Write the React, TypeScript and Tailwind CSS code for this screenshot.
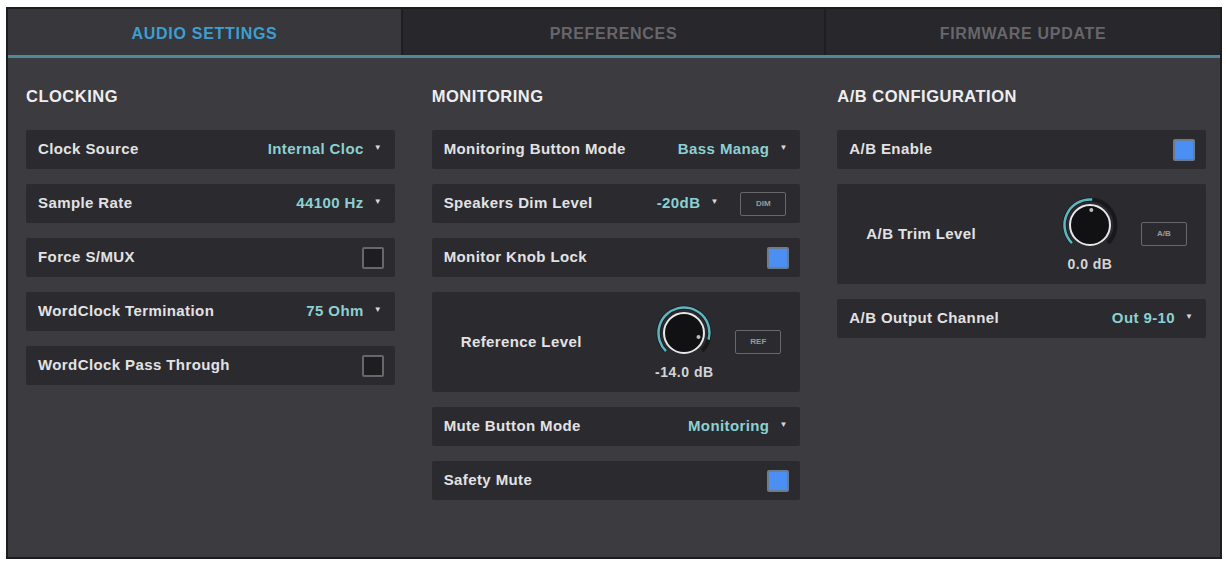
import React from "react";

const font = { fontFamily: '"Liberation Sans", Arial, sans-serif' };

type RowProps = { label: string; children?: React.ReactNode };

const Row = ({ label, children }: RowProps) => (
  <div className="flex h-[39px] items-center justify-between rounded-[2px] bg-[#2b2a2e] pl-[12px] pr-[11px]">
    <span className="text-[15px] font-bold tracking-[0.4px] text-[#e2e2e4]">{label}</span>
    <div className="flex items-center">{children}</div>
  </div>
);

const Select = ({ value }: { value: string }) => (
  <div className="flex items-center gap-[10px] pr-[2px]">
    <span className="text-[15px] font-bold tracking-[0.4px] text-[#8cd0d3]">{value}</span>
    <span className="-mt-[3px] text-[8px] leading-none text-[#d8d8da]">▼</span>
  </div>
);

const Check = ({ on }: { on?: boolean }) => (
  <div
    className={
      on
        ? "h-[22px] w-[22px] rounded-[2px] border-2 border-[#6c7c8e] bg-[#4b8ff2]"
        : "h-[22px] w-[22px] rounded-[2px] border-2 border-[#67676b] bg-[#1e1e20]"
    }
  />
);

const SmallButton = ({ text }: { text: string }) => (
  <div className="flex h-[24px] w-[46px] items-center justify-center rounded-[2px] border border-[#68686c] text-[8px] font-bold text-[#9a9a9e]">
    {text}
  </div>
);

const pt = (a: number, r: number) => {
  const rad = (a * Math.PI) / 180;
  return [30 + r * Math.sin(rad), 30 - r * Math.cos(rad)];
};

const arc = (a0: number, a1: number, r: number) => {
  const [x0, y0] = pt(a0, r);
  const [x1, y1] = pt(a1, r);
  const large = a1 - a0 > 180 ? 1 : 0;
  return `M ${x0} ${y0} A ${r} ${r} 0 ${large} 1 ${x1} ${y1}`;
};

const Knob = ({ end }: { end: number }) => {
  const [dx, dy] = pt(end, 15);
  return (
    <svg width="60" height="60" viewBox="0 0 60 60">
      <path d={arc(-135, 135, 25.5)} fill="none" stroke="#19191b" strokeWidth="4" />
      <path d={arc(-135, end, 25.5)} fill="none" stroke="#5cb6c2" strokeWidth="2.5" />
      <circle cx="30" cy="30" r="20" fill="#111113" stroke="#e8e8ea" strokeWidth="2" />
      <circle cx={dx} cy={dy} r="2" fill="#bdbdc0" />
    </svg>
  );
};

const KnobBox = ({ label, value, end, button }: { label: string; value: string; end: number; button: string }) => (
  <div className="flex h-[100px] items-center rounded-[2px] bg-[#2b2a2e] pl-[29px] pr-[19px]">
    <span className="flex-1 text-[15px] font-bold tracking-[0.4px] text-[#e2e2e4]">{label}</span>
    <div className="flex flex-col items-center pt-[2px]">
      <Knob end={end} />
      <span className="-mt-[1px] text-[14px] font-bold tracking-[0.5px] text-[#d4d4d6]">{value}</span>
    </div>
    <div className="ml-[21px]">
      <SmallButton text={button} />
    </div>
  </div>
);

const Header = ({ text }: { text: string }) => (
  <h3 className="mb-[24px] h-[20px] text-[16.5px] font-bold leading-[20px] tracking-[0.5px] text-[#eeeeef]">{text}</h3>
);

export default function App() {
  return (
    <div className="h-[562px] w-[1226px] bg-white pb-[3px] pl-[6px] pr-[4px] pt-[7px]" style={font}>
      <div className="flex h-full flex-col border-2 border-[#1d1d20] bg-[#3c3b40]">
        <div className="flex h-[49px] border-b-[3px] border-[#4c8a95]">
          <div className="flex w-[393px] items-center justify-center bg-[#38373c] pt-[3px] text-[16px] font-bold tracking-[0.7px] text-[#3b9fd2]">
            AUDIO SETTINGS
          </div>
          <div className="flex w-[425px] items-center justify-center border-x-2 border-[#1f1e22] bg-[#28272b] pt-[3px] text-[16px] font-bold tracking-[0.7px] text-[#66666b]">
            PREFERENCES
          </div>
          <div className="flex flex-1 items-center justify-center bg-[#28272b] pt-[3px] text-[16px] font-bold tracking-[0.7px] text-[#66666b]">
            FIRMWARE UPDATE
          </div>
        </div>

        <div className="grid grid-cols-3 gap-x-[37px] pl-[18px] pr-[14px] pt-[28px]">
          <div className="flex flex-col">
            <Header text="CLOCKING" />
            <div className="flex flex-col gap-[15px]">
              <Row label="Clock Source">
                <Select value="Internal Cloc" />
              </Row>
              <Row label="Sample Rate">
                <Select value="44100 Hz" />
              </Row>
              <Row label="Force S/MUX">
                <Check />
              </Row>
              <Row label="WordClock Termination">
                <Select value="75 Ohm" />
              </Row>
              <Row label="WordClock Pass Through">
                <Check />
              </Row>
            </div>
          </div>

          <div className="flex flex-col">
            <Header text="MONITORING" />
            <div className="flex flex-col gap-[15px]">
              <Row label="Monitoring Button Mode">
                <Select value="Bass Manag" />
              </Row>
              <Row label="Speakers Dim Level">
                <Select value="-20dB" />
                <div className="ml-[20px] mr-[3px]">
                  <SmallButton text="DIM" />
                </div>
              </Row>
              <Row label="Monitor Knob Lock">
                <Check on />
              </Row>
              <KnobBox label="Reference Level" value="-14.0 dB" end={105} button="REF" />
              <Row label="Mute Button Mode">
                <Select value="Monitoring" />
              </Row>
              <Row label="Safety Mute">
                <Check on />
              </Row>
            </div>
          </div>

          <div className="flex flex-col">
            <Header text="A/B CONFIGURATION" />
            <div className="flex flex-col gap-[15px]">
              <Row label="A/B Enable">
                <Check on />
              </Row>
              <KnobBox label="A/B Trim Level" value="0.0 dB" end={5} button="A/B" />
              <Row label="A/B Output Channel">
                <Select value="Out 9-10" />
              </Row>
            </div>
          </div>
        </div>
      </div>
    </div>
  );
}
